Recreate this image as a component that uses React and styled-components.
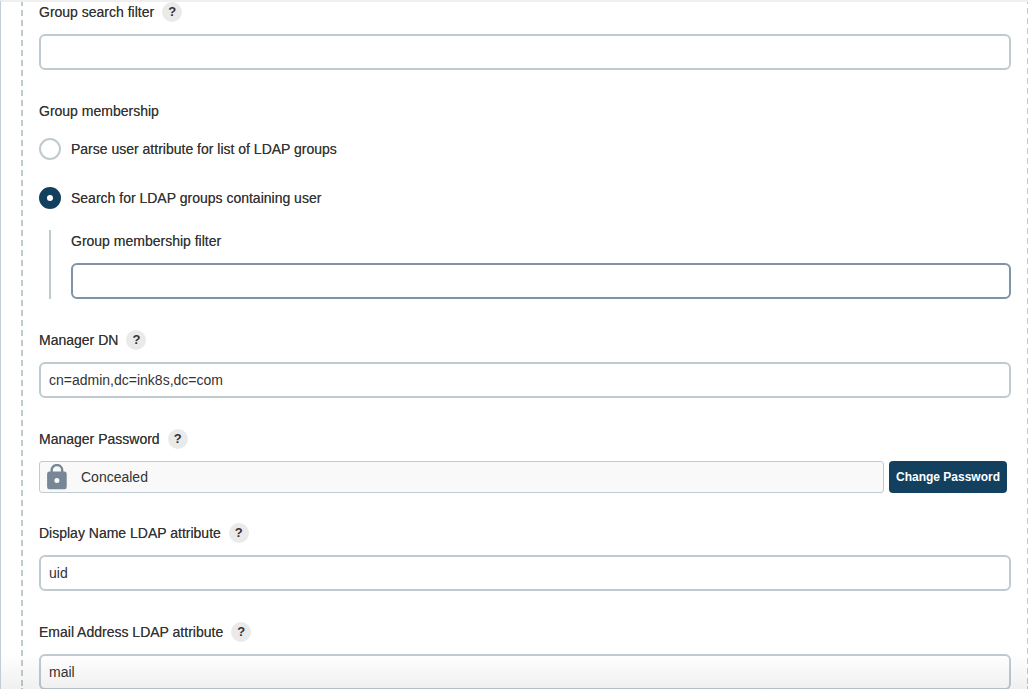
import { useState } from 'react'
import styled, { createGlobalStyle } from 'styled-components'

const GlobalStyle = createGlobalStyle`
    :root {
        --text: #333333;
        --navy: #14405f;
        --line: #bfcbcf;
        --focus: #8194a5;
        --grey: #eaeaea;
    }
    * { box-sizing: border-box; }
    body {
        margin: 0;
        background: #fff;
        color: var(--text);
        font-family: "Liberation Sans", Arial, sans-serif;
        font-size: 14px;
        line-height: 20px;
        overflow: hidden;
    }
    button, input { font: inherit; color: inherit; }
`

const Panel = styled.main`
    position: relative;
    height: calc(100vh - 4px);
    overflow: hidden;
    border-top: 2px solid #efefef;
    border-left: 1px solid #c3cdd8;
    padding-left: 20px;
`

const dashes = 'repeating-linear-gradient(var(--line) 0 6px, transparent 6px 10px)'

const Form = styled.form`
    padding: 0 17px 0 18px;
    background-image: ${dashes}, ${dashes};
    background-size: 2px 100%, 1px 100%;
    background-position: left 0 top -2px, right 0 top -4px;
    background-repeat: repeat-y;
`

const Field = styled.div`
    margin-bottom: ${(p) => (p.$compact ? 30 : 31)}px;
`

const LabelRow = styled.div`
    display: flex;
    align-items: center;
    gap: 8px;
    height: 20px;
    margin-bottom: 12px;
`

const Label = styled.label`
    font-weight: 500;
    text-shadow: 0 0 0 rgba(51, 51, 51, 0.7);
`

const Help = styled.button`
    width: 20px;
    height: 20px;
    padding: 0;
    border: 0;
    border-radius: 50%;
    background: var(--grey);
    font-size: 13px;
    font-weight: 700;
    line-height: 20px;
    cursor: pointer;
`

const TextInput = styled.input`
    display: block;
    width: 100%;
    height: 36px;
    padding: 0 8px;
    border: 2px solid ${(p) => (p.$active ? 'var(--focus)' : 'var(--line)')};
    border-radius: 6px;
    background: #fff;
    outline: none;
    &:focus { border-color: var(--focus); }
`

const RadioGroup = styled.fieldset`
    margin: 0 0 31px;
    padding: 0;
    border: 0;
    min-width: 0;
`

const Legend = styled.legend`
    padding: 0;
    margin-bottom: 17px;
    font-weight: 500;
    text-shadow: 0 0 0 rgba(51, 51, 51, 0.7);
`

const RadioRow = styled.div`
    display: flex;
    align-items: center;
    gap: 10px;
    height: 22px;
    margin-bottom: ${(p) => (p.$last ? 21 : 27)}px;
`

const Radio = styled.input`
    appearance: none;
    width: 22px;
    height: 22px;
    margin: 0;
    border: 2px solid var(--line);
    border-radius: 50%;
    background: #fff;
    &:checked { border: 8px solid var(--navy); }
`

const Nested = styled.div`
    margin-left: 10px;
    padding: 1px 0 0 20px;
    border-left: 2px solid var(--line);
`

const PasswordRow = styled.div`
    display: flex;
    gap: 5px;
    padding-right: 4px;
`

const Concealed = styled.div`
    flex: 1;
    display: flex;
    align-items: center;
    gap: 14px;
    height: 32px;
    padding: 0 7px;
    border: 1px solid var(--line);
    border-radius: 3px;
    background: #f9f9f9;
`

const ChangeButton = styled.button`
    height: 32px;
    padding: 0 7px;
    border: 0;
    border-radius: 4px;
    background: var(--navy);
    color: #fff;
    font-size: 12px;
    font-weight: 700;
    cursor: pointer;
`

const Fade = styled.div`
    position: absolute;
    left: 0;
    right: 0;
    bottom: 0;
    height: 36px;
    background: linear-gradient(rgba(0, 0, 0, 0), rgba(0, 0, 0, 0.06));
    pointer-events: none;
`

const Lock = () => (
    <svg width="20" height="26" viewBox="0 0 20 26" aria-hidden="true">
        <path d="M4.6 9V6.4a5.3 5.3 0 0 1 10.6 0V9" fill="none" stroke="#788796" strokeWidth="2.4" />
        <path
            fill="#788796"
            fillRule="evenodd"
            d="M2.4 7.6h15a2.3 2.3 0 0 1 2.3 2.3v13a2.3 2.3 0 0 1-2.3 2.3h-15A2.3 2.3 0 0 1 .1 22.9v-13a2.3 2.3 0 0 1 2.3-2.3zM9.9 14.1a2.5 2.5 0 1 0 0 5 2.5 2.5 0 0 0 0-5z"
        />
    </svg>
)

function TextField({ id, label, value = '', help = true, active }) {
    return (
        <>
            <LabelRow>
                <Label htmlFor={id}>{label}</Label>
                {help && <Help type="button">?</Help>}
            </LabelRow>
            <TextInput id={id} defaultValue={value} $active={active} />
        </>
    )
}

export default function App() {
    const [membership, setMembership] = useState('search')

    return (
        <>
            <GlobalStyle />
            <Panel>
                <Form>
                    <Field>
                        <TextField id="groupSearchFilter" label="Group search filter" />
                    </Field>
                    <RadioGroup>
                        <Legend>Group membership</Legend>
                        <RadioRow>
                            <Radio
                                type="radio"
                                id="parse"
                                name="membership"
                                checked={membership === 'parse'}
                                onChange={() => setMembership('parse')}
                            />
                            <Label htmlFor="parse">Parse user attribute for list of LDAP groups</Label>
                        </RadioRow>
                        <RadioRow $last>
                            <Radio
                                type="radio"
                                id="search"
                                name="membership"
                                checked={membership === 'search'}
                                onChange={() => setMembership('search')}
                            />
                            <Label htmlFor="search">Search for LDAP groups containing user</Label>
                        </RadioRow>
                        {membership === 'search' && (
                            <Nested>
                                <TextField id="membershipFilter" label="Group membership filter" help={false} active />
                            </Nested>
                        )}
                    </RadioGroup>
                    <Field>
                        <TextField id="managerDn" label="Manager DN" value="cn=admin,dc=ink8s,dc=com" />
                    </Field>
                    <Field $compact>
                        <LabelRow>
                            <Label htmlFor="changePassword">Manager Password</Label>
                            <Help type="button">?</Help>
                        </LabelRow>
                        <PasswordRow>
                            <Concealed>
                                <Lock />
                                <span>Concealed</span>
                            </Concealed>
                            <ChangeButton type="button" id="changePassword">Change Password</ChangeButton>
                        </PasswordRow>
                    </Field>
                    <Field>
                        <TextField id="displayName" label="Display Name LDAP attribute" value="uid" />
                    </Field>
                    <Field>
                        <TextField id="email" label="Email Address LDAP attribute" value="mail" />
                    </Field>
                </Form>
                <Fade />
            </Panel>
        </>
    )
}
